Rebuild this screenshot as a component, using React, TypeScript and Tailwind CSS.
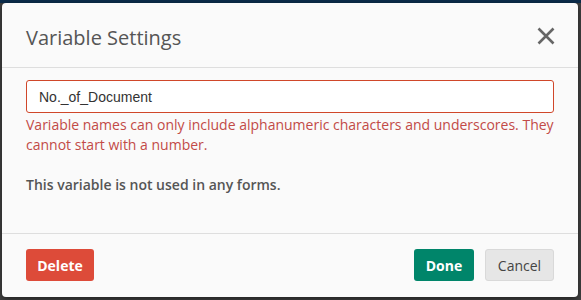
export default function App() {
  return (
    <div className="relative h-[300px] w-[581px] overflow-hidden bg-[#404040] font-['Open_Sans',sans-serif]">
      <div className="h-[3px] bg-[#0b2c4b]" />
      <div className="ml-[2px] flex h-[294px] w-[576px] flex-col rounded-[4px] bg-[#fafafa] shadow-[0_2px_6px_rgba(0,0,0,0.5)]">
        <div className="flex h-[65px] items-center justify-between border-b border-[#dedede] pl-[24px] pr-[23px]">
          <h2 className="mt-[6px] text-[20px] font-medium leading-none text-[#555]">Variable Settings</h2>
          <svg width="18" height="18" viewBox="0 0 18 18" className="mt-[1px]">
            <path d="M1.5 1.5 L16.5 16.5 M16.5 1.5 L1.5 16.5" stroke="#666" strokeWidth="2.6" strokeLinecap="butt" />
          </svg>
        </div>
        <div className="flex-1 px-[24px] pt-[12px]">
          <input
            readOnly
            value="No._of_Document"
            className="block h-[33px] w-[528px] rounded-[3px] border border-[#d0472a] bg-white px-[12px] font-['Liberation_Sans',Arial,sans-serif] text-[14px] text-[#333] outline-none"
          />
          <p className="mt-[2px] text-[14px] leading-[20px] text-[#c24a47]">
            Variable names can only include alphanumeric characters and underscores. They cannot start with a number.
          </p>
          <p className="mt-[20px] text-[14px] font-semibold leading-[20px] text-[#555]">
            This variable is not used in any forms.
          </p>
        </div>
        <div className="flex h-[64px] items-center border-t border-[#dedede] px-[24px] pb-[1px]">
          <button className="h-[32px] w-[68px] rounded-[3px] bg-[#dd4b39] text-[14px] font-bold text-white">
            Delete
          </button>
          <button className="ml-auto h-[32px] w-[60px] rounded-[3px] bg-[#00856a] text-[14px] font-bold text-white">
            Done
          </button>
          <button className="ml-[11px] h-[32px] w-[69px] rounded-[3px] border border-[#d9d9d9] bg-[#e6e6e6] text-[14px] text-[#444]">
            Cancel
          </button>
        </div>
      </div>
    </div>
  );
}
